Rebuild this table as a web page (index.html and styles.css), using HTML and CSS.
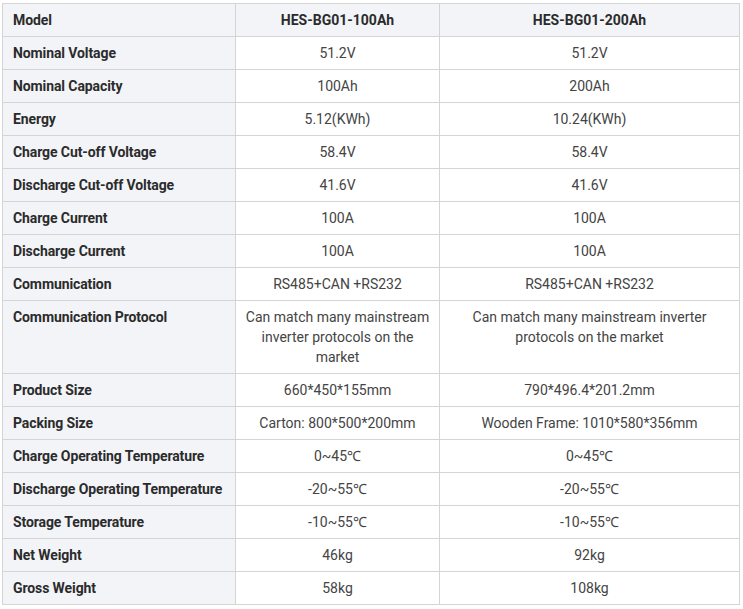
FILE: index.html
```html
<!DOCTYPE html>
<html>
<head>
<meta charset="utf-8">
<link rel="stylesheet" href="styles.css">
</head>
<body>
<div class="wrap">
<table class="spec">
  <colgroup>
    <col class="c1"><col class="c2"><col class="c3">
  </colgroup>
  <thead>
    <tr class="head"><th class="label">Model</th><th>HES-BG01-100Ah</th><th>HES-BG01-200Ah</th></tr>
  </thead>
  <tbody>
    <tr><th class="label">Nominal Voltage</th><td>51.2V</td><td>51.2V</td></tr>
    <tr><th class="label">Nominal Capacity</th><td>100Ah</td><td>200Ah</td></tr>
    <tr><th class="label">Energy</th><td>5.12(KWh)</td><td>10.24(KWh)</td></tr>
    <tr><th class="label">Charge Cut-off Voltage</th><td>58.4V</td><td>58.4V</td></tr>
    <tr><th class="label">Discharge Cut-off Voltage</th><td>41.6V</td><td>41.6V</td></tr>
    <tr><th class="label">Charge Current</th><td>100A</td><td>100A</td></tr>
    <tr><th class="label">Discharge Current</th><td>100A</td><td>100A</td></tr>
    <tr><th class="label">Communication</th><td>RS485+CAN +RS232</td><td>RS485+CAN +RS232</td></tr>
    <tr class="tall"><th class="label">Communication Protocol</th><td>Can match many mainstream inverter protocols on the market</td><td>Can match many mainstream inverter protocols on the market</td></tr>
    <tr><th class="label">Product Size</th><td>660*450*155mm</td><td>790*496.4*201.2mm</td></tr>
    <tr><th class="label">Packing Size</th><td>Carton: 800*500*200mm</td><td>Wooden Frame: 1010*580*356mm</td></tr>
    <tr><th class="label">Charge Operating Temperature</th><td>0~45℃</td><td>0~45℃</td></tr>
    <tr><th class="label">Discharge Operating Temperature</th><td>-20~55℃</td><td>-20~55℃</td></tr>
    <tr><th class="label">Storage Temperature</th><td>-10~55℃</td><td>-10~55℃</td></tr>
    <tr><th class="label">Net Weight</th><td>46kg</td><td>92kg</td></tr>
    <tr><th class="label">Gross Weight</th><td>58kg</td><td>108kg</td></tr>
  </tbody>
</table>
</div>
</body>
</html>
```
FILE: styles.css
```css
html, body {
  margin: 0;
  padding: 0;
  background: #ffffff;
}
.wrap {
  padding: 3px 0 0 2px;
  background: #ffffff;
}
.spec {
  border-collapse: collapse;
  table-layout: fixed;
  width: 737px;
  font-family: Roboto, "Liberation Sans", Arial, sans-serif;
  font-size: 14px;
  line-height: 20px;
  color: #444;
  border: 1px solid #cfcfcf;
}
.c1 { width: 233px; }
.c2 { width: 204px; }
.c3 { width: 300px; }
.spec th, .spec td {
  border: 1px solid #d4d4d4;
  padding: 6px 10px;
  vertical-align: top;
}
.spec td {
  text-align: center;
  font-weight: 400;
  color: #444;
}
.spec th {
  font-weight: 700;
  color: #2b2b2b;
  text-align: center;
}
.spec th.label {
  text-align: left;
  background: #f2f4f8;
  white-space: nowrap;
  padding-right: 2px;
  letter-spacing: -0.1px;
}
.head th {
  background: #f2f4f8;
}
.tall td {
  padding-left: 8px;
  padding-right: 8px;
}
```
